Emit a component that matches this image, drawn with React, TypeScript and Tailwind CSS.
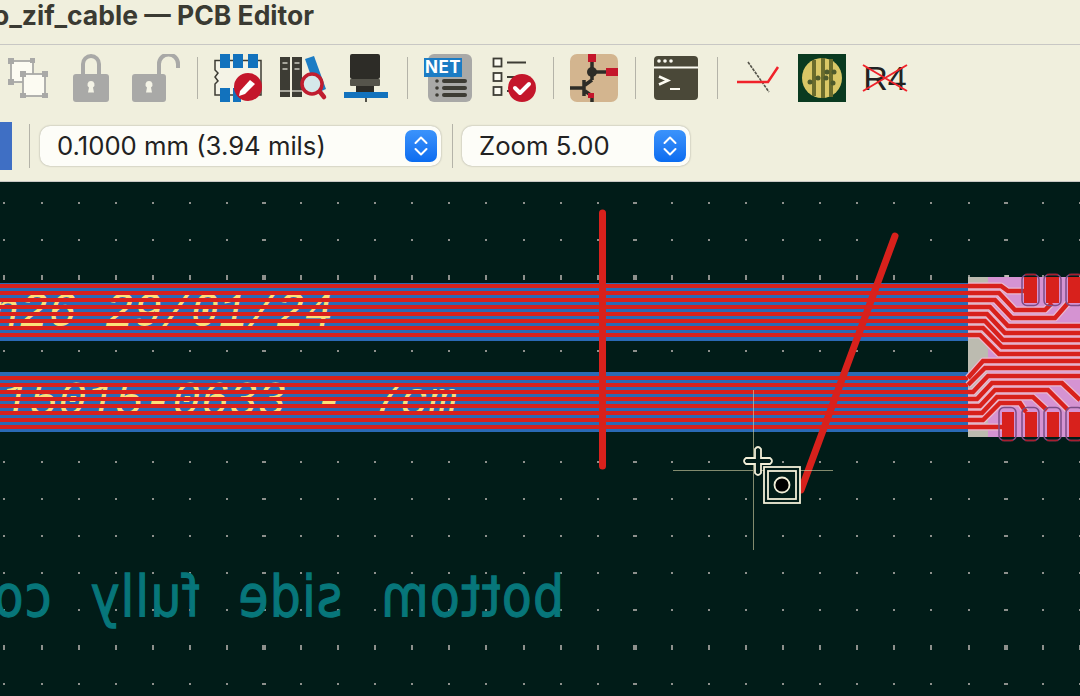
import { useMemo } from 'react'

const Sep = ({ className = '' }: any) => <div className={`h-[42px] w-px shrink-0 bg-[#b4b3a8] ${className}`} />

const Slot = ({ children, w, className = '' }: any) => (
  <div className={`flex h-[48px] shrink-0 items-center justify-center ${className}`} style={{ width: w }}>
    {children}
  </div>
)

const Stepper = () => (
  <div className="flex h-[32px] w-[32px] items-center justify-center rounded-[7px] bg-gradient-to-b from-[#3b93fb] to-[#0a6cf0]">
    <svg width="16" height="24" viewBox="0 0 16 24" fill="none" stroke="white" strokeWidth="2" strokeLinecap="round" strokeLinejoin="round">
      <path d="M2.500 9 L8 3.500 L13.500 9" />
      <path d="M2.500 15 L8 20.500 L13.500 15" />
    </svg>
  </div>
)

const Select = ({ label, className }: any) => (
  <div className={`flex h-[40px] shrink-0 items-center justify-between rounded-[10px] bg-[#fdfdf8] pl-[17px] pr-[4px] shadow-[0_0_2px_rgba(0,0,0,0.35)] ${className}`}>
    <span className="whitespace-nowrap text-[25.700px] leading-none text-[#222222]">{label}</span>
    <Stepper />
  </div>
)

const SelectIcon = () => (
  <svg width="40" height="40" viewBox="0 0 40 40">
    <g fill="#fcfbf2" stroke="#a9a9a7" strokeWidth="1.800">
      <rect x="3" y="3" width="22" height="21" />
      <rect x="15" y="16" width="22" height="22" />
    </g>
    <g fill="#a9a9a7">
      <rect x="0" y="0" width="6" height="6" />
      <rect x="22" y="0" width="5" height="5" />
      <rect x="0" y="21" width="6" height="6" />
      <rect x="12" y="13" width="6" height="6" />
      <rect x="34" y="13" width="6" height="6" />
      <rect x="12" y="35" width="6" height="5" />
      <rect x="34" y="35" width="6" height="5" />
    </g>
  </svg>
)

const LockIcon = () => (
  <svg width="36" height="48" viewBox="0 0 36 48">
    <path d="M10 22 V10 a8 8 0 0 1 16 0 V22" fill="none" stroke="#a9a9a7" strokeWidth="4" />
    <rect x="0" y="20" width="36" height="28" rx="3" fill="#a9a9a7" />
    <path d="M18 27 a3.500 3.500 0 0 1 2 6.400 l1 5 h-6 l1 -5 a3.500 3.500 0 0 1 2 -6.400 z" fill="#f4f3e6" />
  </svg>
)

const UnlockIcon = () => (
  <svg width="48" height="48" viewBox="0 0 48 48">
    <path d="M27 22 V10 a9.500 9.500 0 0 1 19 0 V14" fill="none" stroke="#a9a9a7" strokeWidth="4" />
    <rect x="0" y="20" width="34" height="28" rx="3" fill="#a9a9a7" />
    <path d="M17 27 a3.500 3.500 0 0 1 2 6.400 l1 5 h-6 l1 -5 a3.500 3.500 0 0 1 2 -6.400 z" fill="#f4f3e6" />
  </svg>
)

const BoardCheckIcon = () => (
  <svg width="48" height="48" viewBox="0 0 48 48">
    <path d="M1 6.500 H47 V41 H1 V30 l3 -3 l-3 -4 l3 -4 l-3 -3 z" fill="#f4f3e6" stroke="#3d3c34" strokeWidth="1.500" />
    <g fill="#1272bd">
      <rect x="6" y="0" width="10" height="14" />
      <rect x="19" y="0" width="10" height="14" />
      <rect x="34" y="0" width="10" height="14" />
      <rect x="6" y="34" width="10" height="14" />
      <rect x="19" y="34" width="8" height="14" />
    </g>
    <circle cx="34" cy="33" r="14" fill="#c4162b" />
    <path d="M26 37 L36 26 L41 30 L31 40 L25 42 z" fill="#ffffff" />
  </svg>
)

const LibraryIcon = () => (
  <svg width="48" height="50" viewBox="0 0 48 50">
    <rect x="0" y="4" width="10" height="40" fill="#3d3c34" />
    <rect x="12" y="4" width="10" height="40" fill="#3d3c34" />
    <path d="M25 6 L34 3 L46 36 L37 40 z" fill="#1b7cc4" />
    <g fill="#a7a69c">
      <rect x="2.500" y="9" width="5" height="2" />
      <rect x="2.500" y="15" width="5" height="2" />
      <rect x="14.500" y="9" width="5" height="2" />
      <rect x="14.500" y="15" width="5" height="2" />
      <rect x="0" y="37" width="10" height="2" />
      <rect x="12" y="37" width="10" height="2" />
    </g>
    <circle cx="32" cy="31" r="10" fill="#d5e8ea" stroke="#c01d2f" strokeWidth="3.500" />
    <path d="M40 39 L44 44" stroke="#c01d2f" strokeWidth="4.500" strokeLinecap="round" />
  </svg>
)

const FootprintIcon = () => (
  <svg width="44" height="48" viewBox="0 0 44 48">
    <rect x="6" y="0" width="30" height="25" rx="2" fill="#2d2c27" />
    <rect x="6" y="25" width="30" height="7" rx="1" fill="#55544b" />
    <rect x="12" y="32" width="18" height="6" fill="#2d2c27" />
    <rect x="0" y="38" width="44" height="6" fill="#1272bd" />
    <rect x="21" y="44" width="2" height="4" fill="#55544b" />
  </svg>
)

const NetIcon = () => (
  <div className="relative h-[48px] w-[48px]">
    <div className="absolute left-[4px] top-0 h-[48px] w-[44px] rounded-[6px] bg-[#a9a9a7]" />
    <div className="absolute left-0 top-[4px] flex h-[19px] w-[38px] items-center justify-center bg-[#1b7cc4] text-[17px] font-bold leading-none tracking-[0.5px] text-white">
      NET
    </div>
    <svg className="absolute left-0 top-0" width="48" height="48" viewBox="0 0 48 48">
      <g fill="#3d3c34">
        <circle cx="13" cy="27" r="1.800" />
        <circle cx="13" cy="34" r="1.800" />
        <circle cx="13" cy="41" r="1.800" />
        <rect x="18" y="25" width="25" height="4" rx="2" />
        <rect x="18" y="32" width="25" height="4" rx="2" />
        <rect x="18" y="39" width="25" height="4" rx="2" />
      </g>
    </svg>
  </div>
)

const ChecklistIcon = () => (
  <svg width="46" height="48" viewBox="0 0 46 48">
    <g fill="#fcfbf2" stroke="#3d3c34" strokeWidth="1.800">
      <rect x="2.500" y="4.500" width="8" height="8" />
      <rect x="2.500" y="19" width="8" height="8" />
      <rect x="2.500" y="33" width="8" height="8" />
    </g>
    <path d="M16 8.500 H35 M16 23 H26 M16 37 H20" stroke="#3d3c34" strokeWidth="1.800" />
    <circle cx="31" cy="34" r="14" fill="#c4162b" />
    <path d="M24 34 L29 39 L38 30" fill="none" stroke="white" strokeWidth="4" strokeLinecap="round" strokeLinejoin="round" />
  </svg>
)

const SchematicIcon = () => (
  <svg width="48" height="48" viewBox="0 0 48 48">
    <rect x="0" y="0" width="48" height="48" rx="7" fill="#d3b58f" />
    <path d="M22 7 V26 M22 18 H38 M0 34 H14 M14 26 V42 M15 31 L22 26 M15 37 L22 42 V48" stroke="#2d2c27" strokeWidth="3.500" fill="none" />
    <circle cx="22" cy="18" r="5" fill="#2d2c27" />
    <rect x="18" y="0" width="8" height="8" fill="#c4162b" />
    <rect x="36" y="14" width="12" height="8" fill="#c4162b" />
    <rect x="18" y="39" width="6" height="5" fill="#c4162b" />
  </svg>
)

const TerminalIcon = () => (
  <svg width="44" height="44" viewBox="0 0 44 44">
    <rect x="0" y="0" width="44" height="44" rx="4" fill="#4a4838" />
    <rect x="0" y="10.500" width="44" height="2" fill="#fcfbf2" />
    <circle cx="5" cy="5" r="1.800" fill="#fcfbf2" />
    <circle cx="11" cy="5" r="1.800" fill="#fcfbf2" />
    <circle cx="17" cy="5" r="1.800" fill="#fcfbf2" />
    <path d="M5 20.500 L14 24.500 L5 28.500" fill="none" stroke="#fcfbf2" strokeWidth="2.500" />
    <rect x="16" y="32" width="10" height="2" fill="#fcfbf2" />
  </svg>
)

const RouteIcon = () => (
  <svg width="44" height="34" viewBox="0 0 44 34">
    <path d="M11 1 L32 31" fill="none" stroke="#55544b" strokeWidth="1.600" strokeDasharray="3 1" />
    <path d="M0 21 H31 L41 6" fill="none" stroke="#f0222a" strokeWidth="2.500" />
  </svg>
)

const ViaIcon = () => (
  <svg width="48" height="48" viewBox="0 0 48 48">
    <rect x="0" y="0" width="48" height="48" fill="#0a3a20" />
    <circle cx="24" cy="24" r="20" fill="#d9c766" />
    <g fill="#6a6c2c">
      <rect x="14" y="6" width="4" height="36" />
      <rect x="23" y="4" width="4" height="40" />
      <rect x="31" y="5" width="4" height="38" />
    </g>
    <g fill="#4e5a2c">
      <circle cx="20" cy="24" r="2.500" />
      <circle cx="12" cy="28" r="2.500" />
      <circle cx="29" cy="18" r="2.500" />
      <circle cx="36" cy="18" r="2.500" />
      <circle cx="28" cy="24" r="2.500" />
      <circle cx="35" cy="29" r="2.500" />
    </g>
  </svg>
)

const R4Icon = () => (
  <div className="relative flex h-[30px] w-[46px] items-center justify-center">
    <span className="text-[34px] font-normal leading-none text-[#222222] font-['Liberation_Sans',sans-serif]">R4</span>
    <svg className="absolute left-0 top-0" width="46" height="30" viewBox="0 0 46 30">
      <path d="M1 2 L45 28 M1 28 L45 2" fill="none" stroke="#f0222a" strokeWidth="2" />
    </svg>
  </div>
)

const RED = '#d8211c'
const TOP_LINES = [284, 291, 298, 305, 312, 319, 326, 333]
const BOT_LINES = [376, 383, 390, 397, 404, 411, 418, 425]

// fan-out from the tails onto the connector pads
const FAN = [
  'M968 286 H1001 L1008 291 H1026',
  'M968 293 H999 L1015 310 H1045 L1052 303',
  'M968 300 H995 L1012 318 H1055 L1068 303',
  'M968 307 H990 L1008 326 H1080',
  'M968 314 H987 L1005 333 H1080',
  'M968 321 H985 L1003 340 H1080',
  'M968 328 H983 L1002 347 H1080',
  'M968 335 H980 L999 354 H1080',
  'M968 378 L983 361 H1080',
  'M968 385 L985 368 H1080',
  'M968 392 H973 L988 376 H1080',
  'M968 399 H977 L992 383 H1062 L1080 400',
  'M968 406 H980 L995 390 H1048 L1068 410',
  'M968 413 H982 L997 397 H1033 L1047 410',
  'M968 420 H983 L1000 403 H1020 L1026 412',
  'M968 427 H1006',
]

const TOP_PADS = [1022, 1044, 1066]
const BOT_PADS = [999, 1022, 1044, 1066]

const Board = () => {
  const dots = useMemo(() => {
    const out: { x: number; y: number; w: number; h: number; k: string }[] = []
    for (let r = -2; r < 12; r++) {
      for (let c = -7; c < 23; c++) {
        const x = 264 + c * 37.08
        const y = 277 + r * 37
        const w = c % 10 === 0 ? 4 : 2
        const h = r % 10 === 0 ? 5 : 2
        out.push({ x: Math.round(x - w / 2), y: y - Math.floor(h / 2), w, h, k: `${r}-${c}` })
      }
    }
    return out
  }, [])
  return (
    <svg className="absolute left-0 top-0" width="1080" height="514" viewBox="0 182 1080 514">
      {dots.map(d => (
        <rect key={d.k} x={d.x} y={d.y} width={d.w} height={d.h} fill="#8d908c" />
      ))}

      {/* mirrored text on the back silk layer */}
      <text
        transform="translate(564 616) scale(-0.87 1)"
        x="0"
        y="0"
        fill="#07767a"
        stroke="#07767a"
        strokeWidth="1.300"
        fontSize="56"
        letterSpacing="1.500"
        wordSpacing="24"
        className="font-['DejaVu_Sans',sans-serif]"
      >
        bottom side fully co
      </text>

      <rect x="0" y="283" width="970" height="58" fill="#2a6ab5" />
      <rect x="0" y="372" width="970" height="60" fill="#2a6ab5" />

      {/* silk text sits under the copper, only the gaps show it */}
      <g fill="#fbe07a" fontSize="47.500" fontStyle="italic" className="font-['Liberation_Mono',monospace]">
        <text x="-9" y="326">n26 29/01/24</text>
        <text x="1" y="415">15015-0633 - 7cm</text>
      </g>

      {TOP_LINES.map(y => <rect key={y} x="0" y={y} width="970" height="4" fill={RED} />)}
      {BOT_LINES.map(y => <rect key={y} x="0" y={y} width="970" height="4" fill={RED} />)}

      <rect x="968" y="277" width="20" height="160" fill="#bcbbb0" />
      <rect x="1005" y="275" width="4" height="2" fill="#bcbbb0" />
      <rect x="988" y="277" width="92" height="160" fill="#d593d2" />

      <g fill="none" stroke="#eab9cf" strokeWidth="7" strokeLinejoin="round">
        {FAN.map(d => <path key={d} d={d} />)}
      </g>
      <g fill="none" stroke={RED} strokeWidth="4.500">
        {FAN.map(d => <path key={d} d={d} />)}
      </g>

      {TOP_PADS.map(x => (
        <g key={x}>
          <rect x={x + 2} y="277" width="13" height="26" fill={RED} />
          <rect x={x} y="274.500" width="17" height="31" rx="5" fill="none" stroke="#7c4d86" strokeWidth="1.500" />
          <path d={`M${x + 3} 274.500 H${x + 14}`} stroke="#a81f2e" strokeWidth="1.500" />
        </g>
      ))}
      {BOT_PADS.map(x => (
        <g key={x}>
          <rect x={x + 3} y="412" width="12" height="25" fill={RED} />
          <rect x={x} y="407.500" width="17" height="33" rx="5" fill="none" stroke="#7c4d86" strokeWidth="1.500" />
          <path d={`M${x + 3} 440.500 H${x + 14}`} stroke="#a81f2e" strokeWidth="1.500" />
        </g>
      ))}

      <path d="M602.500 213 V466" stroke={RED} strokeWidth="7" strokeLinecap="round" />
      <path d="M801 490 L895 236" stroke={RED} strokeWidth="7" strokeLinecap="round" />

      <path d="M673 470.500 H833 M753.500 390 V550" stroke="#d9d6a8" strokeWidth="1" opacity="0.6" />
      <g fill="none" stroke="#f2efd8" strokeWidth="1.800">
        <rect x="764" y="467" width="36" height="36" fill="#011c18" />
        <rect x="768" y="471" width="28" height="28" />
        <circle cx="782" cy="485" r="7.500" fill="#000000" />
        <path d="M755 449 q3 -4 6 0 V458 H770 q4 3 0 6 H761 V473 q-3 4 -6 0 V464 H746 q-4 -3 0 -6 H755 Z" fill="#011c18" />
      </g>
    </svg>
  )
}

export default function App() {
  return (
    <div className="flex h-[696px] w-[1080px] flex-col overflow-hidden bg-[#f0efdd] font-['Inter','Liberation_Sans',sans-serif]">
      <div className="flex h-[45px] shrink-0 items-center border-b border-[#c8c7c4] pb-[14px]">
        <span className="ml-[-7px] whitespace-nowrap text-[26.500px] font-bold leading-none text-[#3a3a32]">o_zif_cable — PCB Editor</span>
      </div>
      <div className="flex h-[59px] shrink-0 items-start pt-[9px]">
        <Slot w={40} className="ml-[8px]"><SelectIcon /></Slot>
        <Slot w={36} className="ml-[25px]"><LockIcon /></Slot>
        <Slot w={48} className="ml-[23px]"><UnlockIcon /></Slot>
        <Sep className="ml-[17px] mt-[3px]" />
        <Slot w={48} className="ml-[16px]"><BoardCheckIcon /></Slot>
        <Slot w={48} className="ml-[18px]"><LibraryIcon /></Slot>
        <Slot w={44} className="ml-[16px]"><FootprintIcon /></Slot>
        <Sep className="ml-[19px] mt-[3px]" />
        <Slot w={48} className="ml-[16px]"><NetIcon /></Slot>
        <Slot w={46} className="ml-[19px]"><ChecklistIcon /></Slot>
        <Sep className="ml-[16px] mt-[3px]" />
        <Slot w={48} className="ml-[16px]"><SchematicIcon /></Slot>
        <Sep className="ml-[17px] mt-[3px]" />
        <Slot w={44} className="ml-[18px]"><TerminalIcon /></Slot>
        <Sep className="ml-[19px] mt-[3px]" />
        <Slot w={44} className="ml-[19px]"><RouteIcon /></Slot>
        <Slot w={48} className="ml-[17px]"><ViaIcon /></Slot>
        <Slot w={46} className="ml-[16px]"><R4Icon /></Slot>
      </div>
      <div className="flex h-[78px] shrink-0 items-center border-b border-[#c8c7c4] pt-[6px]">
        <div className="h-[48px] w-[12px] bg-[#3f6fc4]" />
        <div className="ml-[17px] h-[44px] w-px bg-[#b4b3a8]" />
        <Select label="0.1000 mm (3.94 mils)" className="ml-[10px] w-[401px]" />
        <div className="ml-[11px] h-[44px] w-px bg-[#b4b3a8]" />
        <Select label="Zoom 5.00" className="ml-[9px] w-[228px]" />
      </div>
      <div className="relative flex-1 overflow-hidden bg-[#011c18]">
        <Board />
      </div>
    </div>
  )
}
